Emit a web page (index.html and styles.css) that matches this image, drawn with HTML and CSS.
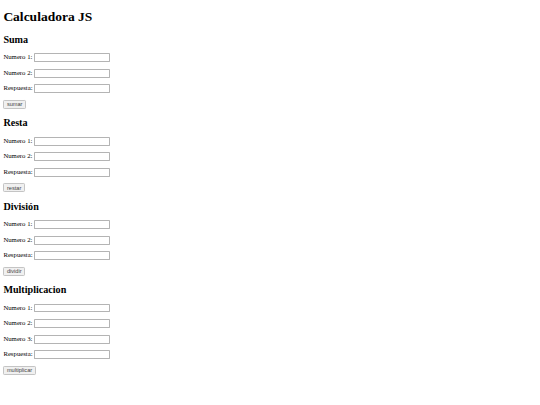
FILE: index.html
```html
<!DOCTYPE html>
<html lang="es">
<head>
<meta charset="utf-8">
<title>Calculadora JS</title>
<link rel="stylesheet" href="styles.css">
</head>
<body class="page">
<h1 class="title">Calculadora JS</h1>

<h2 class="section-title">Suma</h2>
<p class="row">Numero 1: <input class="field" type="text"></p>
<p class="row">Numero 2: <input class="field" type="text"></p>
<p class="row">Respuesta: <input class="field" type="text"></p>
<button class="btn" type="button">sumar</button>

<h2 class="section-title">Resta</h2>
<p class="row">Numero 1: <input class="field" type="text"></p>
<p class="row">Numero 2: <input class="field" type="text"></p>
<p class="row">Respuesta: <input class="field" type="text"></p>
<button class="btn" type="button">restar</button>

<h2 class="section-title">División</h2>
<p class="row">Numero 1: <input class="field" type="text"></p>
<p class="row">Numero 2: <input class="field" type="text"></p>
<p class="row">Respuesta: <input class="field" type="text"></p>
<button class="btn" type="button">dividir</button>

<h2 class="section-title">Multiplicacion</h2>
<p class="row">Numero 1: <input class="field" type="text"></p>
<p class="row">Numero 2: <input class="field" type="text"></p>
<p class="row">Numero 3: <input class="field" type="text"></p>
<p class="row">Respuesta: <input class="field" type="text"></p>
<button class="btn" type="button">multiplicar</button>
</body>
</html>
```

FILE: styles.css
```css
html {
  zoom: 0.421875;
  overflow: hidden;
}
.page {
  margin: 0 8px 8px;
  font-family: "Liberation Serif", "Times New Roman", serif;
  font-size: 16px;
  color: #000;
  background: #fff;
}
.title {
  font-size: 32px;
  font-weight: bold;
  margin: 21px 0 21.44px;
}
.section-title {
  font-size: 24px;
  font-weight: bold;
  margin: 19.92px 0;
}
.row {
  margin: 16px 0;
}
.field {
  font-family: "Liberation Sans", Arial, sans-serif;
  font-size: 13.33px;
  border: 2px solid #b4b4b4;
  border-radius: 2px;
  padding: 1px 2px;
  width: 170px;
}
.btn {
  font-family: "Liberation Sans", Arial, sans-serif;
  font-size: 13.33px;
  color: #444;
  background: #f0f0f0;
  border: 2px solid #c4c4c4;
  border-radius: 3px;
  padding: 1px 6px;
}
```
